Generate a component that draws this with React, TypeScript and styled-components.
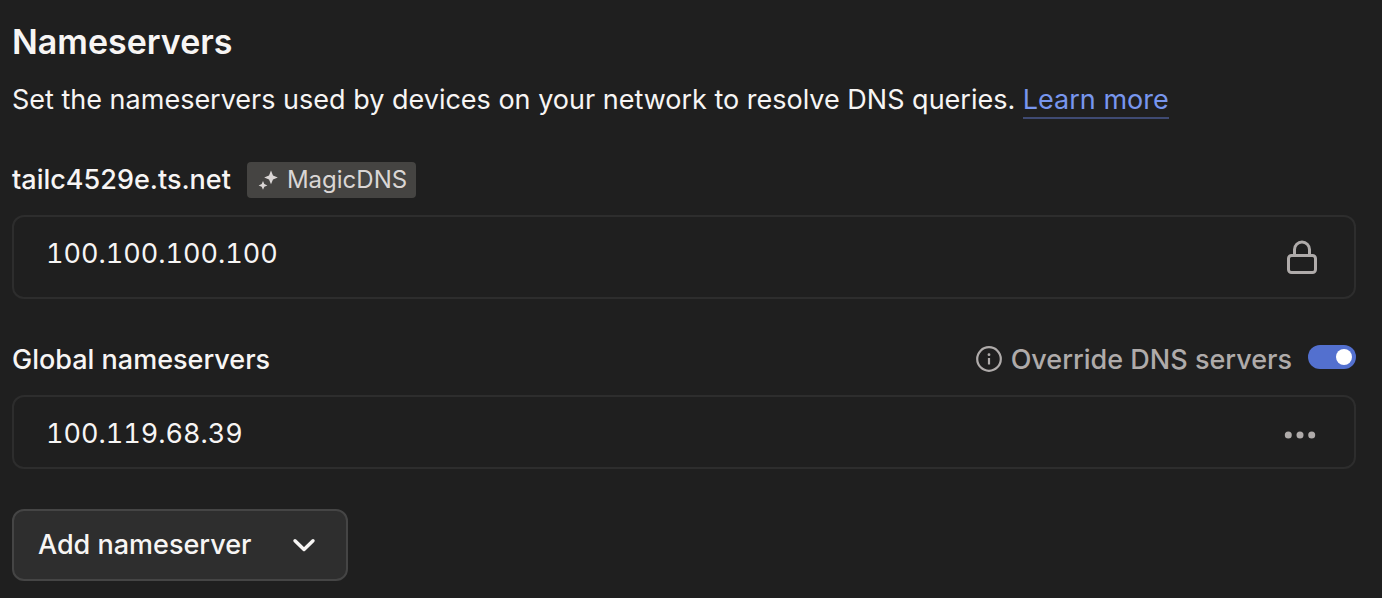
import React from "react";
import styled, { createGlobalStyle } from "styled-components";

const GlobalStyle = createGlobalStyle`
  *, *::before, *::after { box-sizing: border-box; }
  html { background: #1f1f1f; }
  body {
    margin: 0;
    color: #f7f5f4;
    background: #1f1f1f;
    font-family: Inter, "Liberation Sans", sans-serif;
    font-size: 27px;
    line-height: 40px;
  }
  h2, h3, p, ul { margin: 0; padding: 0; }
  button, input { font: inherit; color: inherit; }
`;

const Page = styled.main`
  padding: 20px 26px 17px 12px;
`;

const Title = styled.h2`
  font-size: 34px;
  line-height: 44px;
  font-weight: 600;
`;

const Description = styled.p`
  margin-top: 16px;
`;

const Link = styled.a`
  display: inline-block;
  line-height: 34px;
  color: #7896ee;
  text-decoration: none;
  border-bottom: 2px solid #3f4a72;
`;

const Section = styled.section`
  margin-top: 40px;

  & + & {
    margin-top: 41px;
  }
`;

const SectionHeader = styled.div`
  display: flex;
  align-items: center;
  gap: 16px;
`;

const SectionTitle = styled.h3`
  font-size: 27px;
  line-height: 40px;
  font-weight: 500;
`;

const Badge = styled.span`
  display: inline-flex;
  align-items: center;
  gap: 8px;
  height: 36px;
  padding: 0 9px 0 10px;
  border-radius: 4px;
  background: #454442;
  color: #dad6d5;
  font-size: 24px;
  line-height: 36px;
`;

const List = styled.ul`
  margin-top: 15px;
  list-style: none;
  border: 2px solid #2d2d2d;
  border-radius: 12px;
`;

const Row = styled.li<{ $height: number }>`
  display: flex;
  align-items: flex-start;
  justify-content: space-between;
  min-height: ${(p) => p.$height}px;
  padding: 17px 34px 0 32px;
`;

const Address = styled.span`
  font-variant-numeric: tabular-nums;
`;

const RowIcon = styled.span`
  display: flex;
  align-items: center;
  height: 46px;
`;

const MenuButton = styled.button`
  display: flex;
  align-items: center;
  height: 42px;
  padding: 0;
  border: 0;
  background: none;
  color: #afabaa;
`;

const Override = styled.label`
  display: flex;
  align-items: center;
  gap: 8px;
  margin-left: auto;
  color: #afabaa;
  font-weight: 500;
`;

const Toggle = styled.input`
  appearance: none;
  display: flex;
  align-items: center;
  justify-content: flex-start;
  width: 48px;
  height: 24px;
  margin: 0 0 6px 8px;
  padding: 0 4px;
  border-radius: 12px;
  background: #454442;

  &::before {
    content: "";
    width: 16px;
    height: 16px;
    border-radius: 50%;
    background: #fff;
  }

  &:checked {
    justify-content: flex-end;
    background: #5370cf;
  }
`;

const AddButton = styled.button`
  display: flex;
  align-items: center;
  gap: 39px;
  height: 72px;
  margin-top: 40px;
  padding: 0 29px 0 24px;
  border: 2px solid #454545;
  border-radius: 12px;
  background: #2e2e2e;
  font-weight: 500;
`;

const SparkleIcon = () => (
  <svg width="22" height="22" viewBox="0 0 22 22" fill="currentColor" aria-hidden="true">
    <path d="M14 1.5 L16 6.4 L20.8 8.4 L16 10.4 L14 15.3 L12 10.4 L7.2 8.4 L12 6.4 Z" />
    <path d="M6 12 L7.3 15.1 L10.4 16.4 L7.3 17.7 L6 20.8 L4.7 17.7 L1.6 16.4 L4.7 15.1 Z" />
  </svg>
);

const LockIcon = () => (
  <svg width="36" height="36" viewBox="0 0 36 36" fill="none" stroke="#afabaa" strokeWidth="3" strokeLinejoin="round" aria-hidden="true">
    <rect x="4.5" y="16.5" width="27" height="17" rx="3" />
    <path d="M10.5 16.5 V10.5 a7.5 7.5 0 0 1 15 0 V16.5" />
  </svg>
);

const InfoIcon = () => (
  <svg width="28" height="28" viewBox="0 0 28 28" fill="none" stroke="currentColor" strokeWidth="2.2" aria-hidden="true">
    <circle cx="14" cy="13" r="11.8" />
    <path d="M14 12 V18.5" />
    <circle cx="14" cy="8.7" r="1.4" fill="currentColor" stroke="none" />
  </svg>
);

const DotsIcon = () => (
  <svg width="40" height="8" viewBox="0 0 40 8" fill="currentColor" aria-hidden="true">
    <circle cx="8.3" cy="4" r="3.5" />
    <circle cx="20" cy="4" r="3.5" />
    <circle cx="31.7" cy="4" r="3.5" />
  </svg>
);

const ChevronIcon = () => (
  <svg width="26" height="26" viewBox="0 0 26 26" fill="none" stroke="currentColor" strokeWidth="3.4" strokeLinecap="round" strokeLinejoin="round" aria-hidden="true">
    <path d="M4 8.7 L13 17.5 L22 8.7" />
  </svg>
);

export default function App() {
  return (
    <>
      <GlobalStyle />
      <Page>
        <Title>Nameservers</Title>
        <Description>
          Set the nameservers used by devices on your network to resolve DNS queries.{" "}
          <Link href="#learn-more">Learn more</Link>
        </Description>

        <Section>
          <SectionHeader>
            <SectionTitle>tailc4529e.ts.net</SectionTitle>
            <Badge>
              <SparkleIcon />
              MagicDNS
            </Badge>
          </SectionHeader>
          <List>
            <Row $height={80}>
              <Address>100.100.100.100</Address>
              <RowIcon>
                <LockIcon />
              </RowIcon>
            </Row>
          </List>
        </Section>

        <Section>
          <SectionHeader>
            <SectionTitle>Global nameservers</SectionTitle>
            <Override>
              <InfoIcon />
              Override DNS servers
              <Toggle type="checkbox" role="switch" defaultChecked />
            </Override>
          </SectionHeader>
          <List>
            <Row $height={70}>
              <Address>100.119.68.39</Address>
              <MenuButton type="button" aria-label="Nameserver options">
                <DotsIcon />
              </MenuButton>
            </Row>
          </List>
        </Section>

        <AddButton type="button">
          Add nameserver
          <ChevronIcon />
        </AddButton>
      </Page>
    </>
  );
}
